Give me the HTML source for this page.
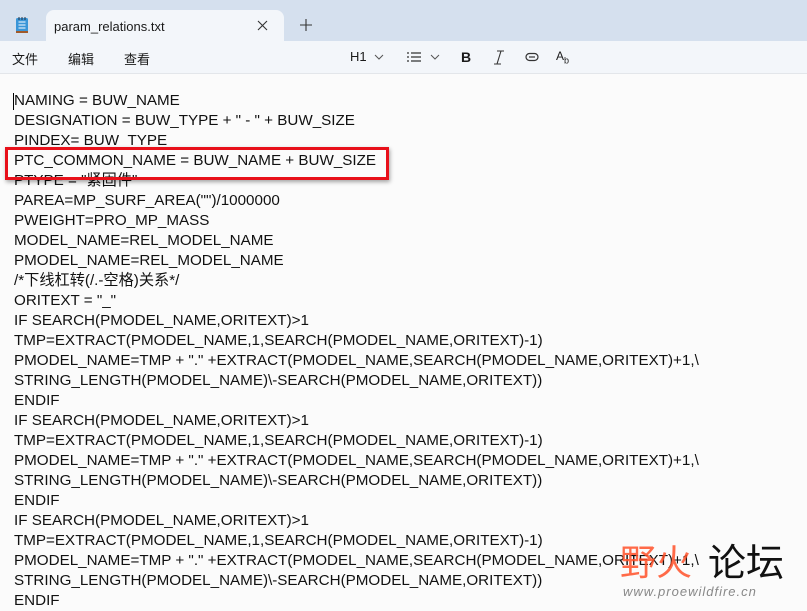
<!DOCTYPE html>
<html><head><meta charset="utf-8"><style>
*{margin:0;padding:0;box-sizing:border-box}
body{width:807px;height:607px;overflow:hidden;background:#fbfbfb;font-family:"Liberation Sans","Noto Sans CJK SC",sans-serif;position:relative}
.title{position:absolute;left:0;top:0;width:807px;height:41px;background:#d5e0ee}
.tab{position:absolute;left:46px;top:10px;width:238px;height:32px;background:#f3f6fa;border-radius:8px 8px 0 0}
.tab span{position:absolute;left:8px;top:9px;font-size:13px;color:#1a1a1a}
.tool{position:absolute;left:0;top:41px;width:807px;height:33px;background:#f3f6fa;border-bottom:1px solid #e3e6ea}
.tool .m{position:absolute;top:8px;font-size:13px;color:#1a1a1a}
.ed{position:absolute;left:14px;top:91px;font-size:15.2px;line-height:20px;color:#111;white-space:pre}
.box{position:absolute;left:5px;top:147px;width:384px;height:33px;border:3px solid #e8101a;box-shadow:1px 2px 4px rgba(0,0,0,.35)}
.wm{position:absolute;font-family:"Noto Sans CJK SC",sans-serif}
</style></head><body>
<div class="title"></div>
<svg style="position:absolute;left:15px;top:16px" width="14" height="18"><rect x="1" y="2" width="12" height="15" rx="1.5" fill="#3a96d8"/><rect x="1" y="15" width="12" height="2" fill="#a05a2a"/><path d="M3.5 6h7M3.5 9h7M3.5 12h7" stroke="#fff" stroke-width="1"/><path d="M4 1v3M7 1v3M10 1v3" stroke="#234" stroke-width="1"/></svg>
<div class="tab"><span>param_relations.txt</span>
<svg style="position:absolute;left:211px;top:10px" width="11" height="11"><path d="M1 1L10 10M10 1L1 10" stroke="#333" stroke-width="1.1"/></svg></div>
<svg style="position:absolute;left:300px;top:19px" width="12" height="12"><path d="M6 0V12M0 6H12" stroke="#333" stroke-width="1.1"/></svg>
<div class="tool">
<span class="m" style="left:12px">文件</span><span class="m" style="left:68px">编辑</span><span class="m" style="left:124px">查看</span>
<span class="m" style="left:350px">H1</span>
<svg style="position:absolute;left:374px;top:13px" width="10" height="6"><path d="M1 1L5 5L9 1" stroke="#555" fill="none"/></svg>
<svg style="position:absolute;left:407px;top:11px" width="14" height="10"><path d="M0 1h2M0 5h2M0 9h2M4 1h10M4 5h10M4 9h10" stroke="#333" stroke-width="1.3"/></svg>
<svg style="position:absolute;left:430px;top:13px" width="10" height="6"><path d="M1 1L5 5L9 1" stroke="#555" fill="none"/></svg>
<span class="m" style="left:461px;font-weight:bold;font-size:14px;top:8px">B</span>
<svg style="position:absolute;left:493px;top:9px" width="12" height="15"><path d="M4 1h7M1 14h7M8 1L4 14" stroke="#333" stroke-width="1.1" fill="none"/></svg>
<svg style="position:absolute;left:525px;top:11px" width="14" height="10"><rect x="1" y="1.5" width="12" height="7" rx="3.5" stroke="#333" fill="none" stroke-width="1.2"/><path d="M4 5h6" stroke="#333" stroke-width="1.2"/></svg>
<span class="m" style="left:556px;font-size:12px;top:8px">A<sub style="font-size:9px">b</sub></span>
</div>
<div class="ed">NAMING = BUW_NAME
DESIGNATION = BUW_TYPE + " - " + BUW_SIZE
PINDEX= BUW_TYPE
PTC_COMMON_NAME = BUW_NAME + BUW_SIZE
PTYPE = "紧固件"
PAREA=MP_SURF_AREA("")/1000000
PWEIGHT=PRO_MP_MASS
MODEL_NAME=REL_MODEL_NAME
PMODEL_NAME=REL_MODEL_NAME
/*下线杠转(/.-空格)关系*/
ORITEXT = "_"
IF SEARCH(PMODEL_NAME,ORITEXT)>1
TMP=EXTRACT(PMODEL_NAME,1,SEARCH(PMODEL_NAME,ORITEXT)-1)
PMODEL_NAME=TMP + "." +EXTRACT(PMODEL_NAME,SEARCH(PMODEL_NAME,ORITEXT)+1,\
STRING_LENGTH(PMODEL_NAME)\-SEARCH(PMODEL_NAME,ORITEXT))
ENDIF
IF SEARCH(PMODEL_NAME,ORITEXT)>1
TMP=EXTRACT(PMODEL_NAME,1,SEARCH(PMODEL_NAME,ORITEXT)-1)
PMODEL_NAME=TMP + "." +EXTRACT(PMODEL_NAME,SEARCH(PMODEL_NAME,ORITEXT)+1,\
STRING_LENGTH(PMODEL_NAME)\-SEARCH(PMODEL_NAME,ORITEXT))
ENDIF
IF SEARCH(PMODEL_NAME,ORITEXT)>1
TMP=EXTRACT(PMODEL_NAME,1,SEARCH(PMODEL_NAME,ORITEXT)-1)
PMODEL_NAME=TMP + "." +EXTRACT(PMODEL_NAME,SEARCH(PMODEL_NAME,ORITEXT)+1,\
STRING_LENGTH(PMODEL_NAME)\-SEARCH(PMODEL_NAME,ORITEXT))
ENDIF</div>
<div style="position:absolute;left:13px;top:93px;width:1px;height:17px;background:#000"></div>
<div class="box"></div>
<div class="wm" style="left:620px;top:540px;font-size:36px;color:rgba(255,80,40,.85);line-height:40px">野火</div>
<div class="wm" style="left:708px;top:540px;font-size:38px;color:#111;line-height:40px">论坛</div>
<div style="position:absolute;left:623px;top:584px;font-size:13px;font-style:italic;color:#888;letter-spacing:1px;font-family:'Liberation Sans',sans-serif">www.proewildfire.cn</div>
</body></html>
